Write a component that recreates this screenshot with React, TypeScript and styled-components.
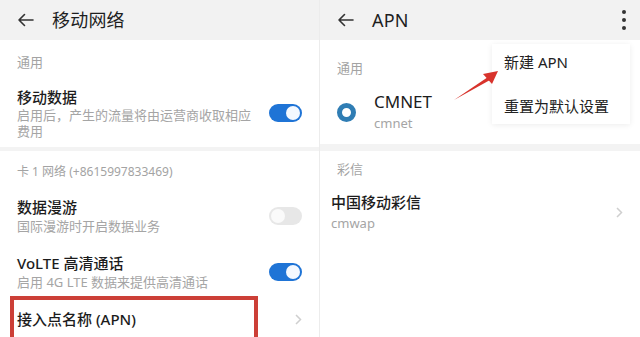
import React from "react";
import styled, { createGlobalStyle } from "styled-components";

const Global = createGlobalStyle`
  html, body { margin: 0; padding: 0; background: #ffffff; overflow: hidden; }
  body { font-family: "Noto Sans", "Noto Sans CJK SC", sans-serif; }
  * { box-sizing: border-box; }
`;

const Screen = styled.div`
  display: flex;
  width: 640px;
  height: 337px;
  overflow: hidden;
  background: #ffffff;
`;

const Panel = styled.div<{ $divider?: boolean }>`
  position: relative;
  width: 320px;
  height: 337px;
  display: flex;
  flex-direction: column;
  background: #ffffff;
  border-right: ${(p) => (p.$divider ? "1px solid #ececec" : "none")};
`;

const Header = styled.div`
  height: 40px;
  flex: none;
  display: flex;
  align-items: center;
  background: #f2f2f2;
  padding-left: 17px;
  gap: 18px;
`;

const Title = styled.div`
  font-family: "Noto Sans", "Noto Sans CJK SC", sans-serif;
  font-size: 18px;
  line-height: 20px;
  color: #1e1e1e;
  letter-spacing: 0.2px;
`;

const Dots = styled.div`
  margin-left: auto;
  margin-right: 14px;
  display: flex;
  flex-direction: column;
  gap: 4px;
  span {
    width: 4px;
    height: 4px;
    border-radius: 50%;
    background: #333;
  }
`;

const Section = styled.div<{ $top: number; $bottom: number }>`
  padding: ${(p) => p.$top}px 0 ${(p) => p.$bottom}px 0;
  background: #ffffff;
`;

const Band = styled.div`
  height: 7px;
  background: #f3f3f3;
`;

const Label = styled.div<{ $small?: boolean }>`
  padding-left: 17px;
  font-size: ${(p) => (p.$small ? 12 : 13)}px;
  line-height: 20px;
  color: #a3a3a3;
  font-family: "Noto Sans", "Noto Sans CJK SC", sans-serif;
`;

const Row = styled.div<{ $top: number; $bottom: number; $left?: number }>`
  position: relative;
  display: flex;
  align-items: center;
  padding: ${(p) => p.$top}px 17px ${(p) => p.$bottom}px ${(p) => p.$left ?? 17}px;
`;

const RowText = styled.div`
  flex: 1;
  display: flex;
  flex-direction: column;
`;

const RowTitle = styled.div<{ $size?: number; $regular?: boolean }>`
  font-size: ${(p) => p.$size ?? 15}px;
  line-height: 20px;
  color: #1c1c1c;
  font-weight: ${(p) => (p.$regular ? 400 : 500)};
  font-family: "Noto Sans", "Noto Sans CJK SC", sans-serif;
`;

const RowSub = styled.div<{ $lh?: number; $mt?: number; $max?: number }>`
  font-size: 13px;
  line-height: ${(p) => p.$lh ?? 18}px;
  margin-top: ${(p) => p.$mt ?? 0}px;
  max-width: ${(p) => (p.$max ? `${p.$max}px` : "none")};
  color: #a5a5a5;
  font-family: "Noto Sans", "Noto Sans CJK SC", sans-serif;
`;

const Toggle = styled.div<{ $on: boolean }>`
  position: relative;
  width: 33px;
  height: 18px;
  flex: none;
  border-radius: 9px;
  margin-left: 12px;
  background: ${(p) => (p.$on ? "#1f74d6" : "#e7e7e7")};
  &::after {
    content: "";
    position: absolute;
    top: 2px;
    left: ${(p) => (p.$on ? "17px" : "2px")};
    width: 14px;
    height: 14px;
    border-radius: 50%;
    background: ${(p) => (p.$on ? "#f4f9ff" : "#fafafa")};
  }
`;

const Radio = styled.div`
  width: 19px;
  height: 19px;
  flex: none;
  border-radius: 50%;
  border: 5px solid #2f7db4;
  background: #ffffff;
  margin-right: 18px;
`;

const Highlight = styled.div`
  position: absolute;
  left: 10px;
  top: 0;
  width: 248px;
  height: 44px;
  border: 4px solid #cc3f37;
  border-bottom: none;
  pointer-events: none;
`;

const Menu = styled.div`
  position: absolute;
  left: 172px;
  top: 44px;
  width: 138px;
  padding: 8px 0;
  background: #ffffff;
  box-shadow: 0 1px 6px rgba(0, 0, 0, 0.08);
  display: flex;
  flex-direction: column;
  gap: 24px;
`;

const MenuItem = styled.div`
  padding-left: 12px;
  font-size: 15px;
  line-height: 20px;
  color: #222;
  font-family: "Noto Sans", "Noto Sans CJK SC", sans-serif;
`;

const Pointer = styled.svg`
  position: absolute;
  left: 130px;
  top: 66px;
`;

const BackArrow = () => (
  <svg width="17" height="14" viewBox="0 0 17 14">
    <path d="M16 7H2M7.5 1.5L2 7l5.5 5.5" fill="none" stroke="#333" strokeWidth="1.6" strokeLinecap="round" strokeLinejoin="round" />
  </svg>
);

const Chevron = () => (
  <svg width="7" height="11" viewBox="0 0 7 11" style={{ flex: "none" }}>
    <path d="M1 1l4.5 4.5L1 10" fill="none" stroke="#cfcfcf" strokeWidth="1.5" />
  </svg>
);

export default function App() {
  return (
    <>
      <Global />
      <Screen>
        <Panel $divider>
          <Header>
            <BackArrow />
            <Title>移动网络</Title>
          </Header>
          <Section $top={12} $bottom={8}>
            <Label>通用</Label>
            <Row $top={15} $bottom={0}>
              <RowText>
                <RowTitle>移动数据</RowTitle>
                <RowSub $lh={16} $max={240}>启用后，产生的流量将由运营商收取相应费用</RowSub>
              </RowText>
              <Toggle $on />
            </Row>
          </Section>
          <Band />
          <Section $top={11} $bottom={0}>
            <Label $small>卡 1 网络 (+8615997833469)</Label>
            <Row $top={15} $bottom={8}>
              <RowText>
                <RowTitle>数据漫游</RowTitle>
                <RowSub>国际漫游时开启数据业务</RowSub>
              </RowText>
              <Toggle $on={false} />
            </Row>
            <Row $top={10} $bottom={5}>
              <RowText>
                <RowTitle>VoLTE 高清通话</RowTitle>
                <RowSub>启用 4G LTE 数据来提供高清通话</RowSub>
              </RowText>
              <Toggle $on />
            </Row>
            <Row $top={13} $bottom={8}>
              <RowText>
                <RowTitle>接入点名称 (APN)</RowTitle>
              </RowText>
              <Chevron />
              <Highlight />
            </Row>
          </Section>
        </Panel>
        <Panel>
          <Header>
            <BackArrow />
            <Title>APN</Title>
            <Dots>
              <span />
              <span />
              <span />
            </Dots>
          </Header>
          <Section $top={18} $bottom={12}>
            <Label>通用</Label>
            <Row $top={14} $bottom={0}>
              <Radio />
              <RowText>
                <RowTitle $size={17} $regular>CMNET</RowTitle>
                <RowSub $mt={2}>cmnet</RowSub>
              </RowText>
            </Row>
          </Section>
          <Band />
          <Section $top={8} $bottom={0}>
            <Label>彩信</Label>
            <Row $top={13} $bottom={0} $left={11}>
              <RowText>
                <RowTitle>中国移动彩信</RowTitle>
                <RowSub $mt={2}>cmwap</RowSub>
              </RowText>
              <Chevron />
            </Row>
          </Section>
          <Menu>
            <MenuItem>新建 APN</MenuItem>
            <MenuItem>重置为默认设置</MenuItem>
          </Menu>
          <Pointer width="50" height="40" viewBox="0 0 50 40">
            <path d="M4 34 L38 11 L40 14 Z" fill="#d8332c" />
            <path d="M48 5 L33 8 L42 18 Z" fill="#d8332c" />
          </Pointer>
        </Panel>
      </Screen>
    </>
  );
}
